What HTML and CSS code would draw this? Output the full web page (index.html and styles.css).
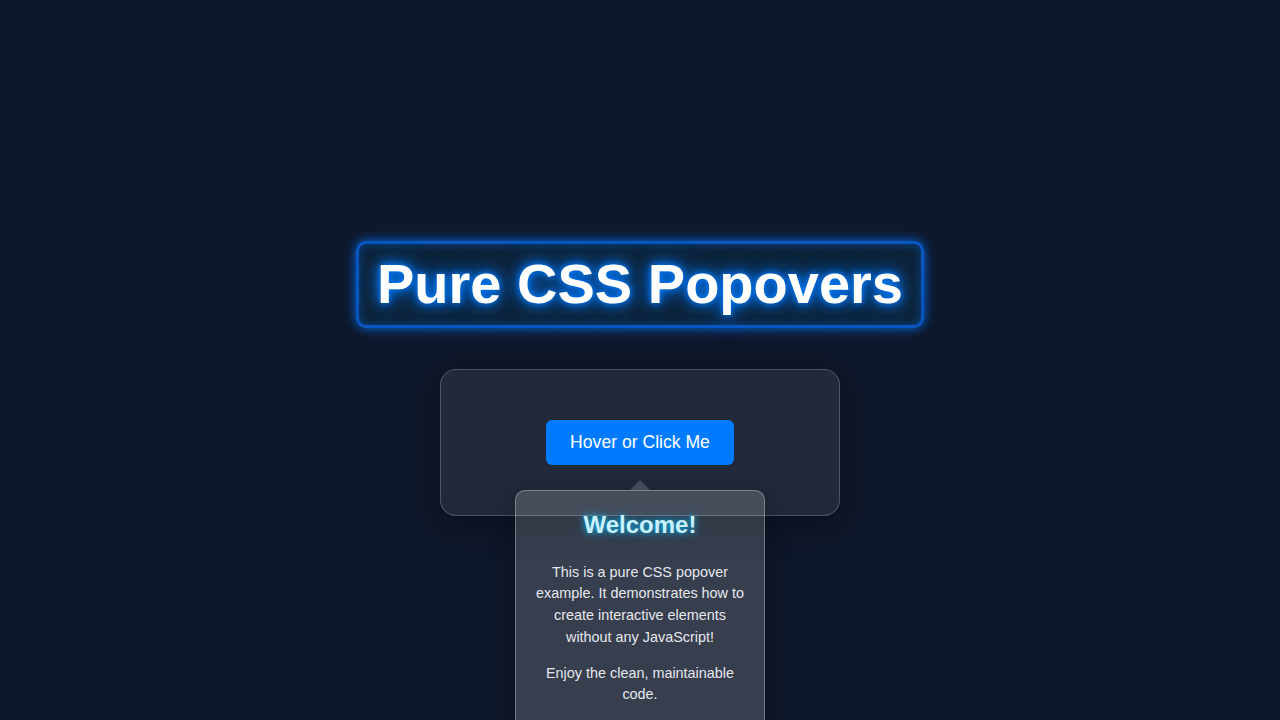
FILE: index.html
```html
<!DOCTYPE html>
<html lang="en">
<head>
<meta charset="utf-8">
<title>Pure CSS Popovers</title>
<link rel="stylesheet" href="styles.css">
</head>
<body>
  <h1 class="title">Pure CSS Popovers</h1>
  <div class="card">
    <div class="popover-wrap">
      <button class="trigger">Hover or Click Me</button>
      <div class="popover">
        <h3 class="popover-title">Welcome!</h3>
        <p class="popover-text">This is a pure CSS popover example. It demonstrates how to create interactive elements without any JavaScript!</p>
        <p class="popover-text">Enjoy the clean, maintainable code.</p>
      </div>
    </div>
  </div>
</body>
</html>
```

FILE: styles.css
```css
html, body {
  margin: 0;
  padding: 0;
}
body {
  min-height: 100vh;
  background: #0f172a;
  font-family: "Liberation Sans", Arial, sans-serif;
  display: flex;
  flex-direction: column;
  align-items: center;
  justify-content: center;
  color: #e5e7eb;
  overflow: hidden;
}
.title {
  margin: 37px 0 41px;
  padding: 8px 18px;
  font-size: 56px;
  font-weight: bold;
  line-height: 1.15;
  color: #ffffff;
  border: 3px solid rgba(10, 100, 230, 0.8);
  border-radius: 10px;
  background: rgba(0, 120, 170, 0.12);
  text-shadow: 0 0 6px #007bff, 0 0 14px #007bff, 0 0 22px rgba(0, 123, 255, 0.7);
  box-shadow: 0 0 10px rgba(0, 123, 255, 0.7), 0 0 18px rgba(0, 123, 255, 0.3), inset 0 0 10px rgba(0, 123, 255, 0.4);
}
.card {
  width: 400px;
  box-sizing: border-box;
  padding: 50px 0;
  display: flex;
  justify-content: center;
  background: rgba(255, 255, 255, 0.08);
  border: 1px solid rgba(255, 255, 255, 0.2);
  border-radius: 16px;
  box-shadow: 0 8px 32px rgba(0, 0, 0, 0.35);
}
.popover-wrap {
  position: relative;
}
.trigger {
  display: block;
  width: 188px;
  height: 45px;
  border: none;
  border-radius: 6px;
  background: #007bff;
  color: #ffffff;
  font-family: "Liberation Sans", Arial, sans-serif;
  font-size: 17.6px;
  cursor: pointer;
}
.popover {
  position: absolute;
  top: calc(100% + 25px);
  left: 50%;
  transform: translateX(-50%);
  width: 250px;
  box-sizing: border-box;
  padding: 20px 20px;
  text-align: center;
  background: rgba(255, 255, 255, 0.17);
  border: 1px solid rgba(255, 255, 255, 0.3);
  border-radius: 10px;
  box-shadow: 0 8px 24px rgba(0, 0, 0, 0.3);
}
.popover::before {
  content: "";
  position: absolute;
  top: -11px;
  left: 50%;
  transform: translateX(-50%);
  border-left: 10px solid transparent;
  border-right: 10px solid transparent;
  border-bottom: 10px solid rgba(255, 255, 255, 0.17);
}
.popover-title {
  margin: 0 0 23px;
  font-size: 24px;
  font-weight: bold;
  color: #c9f1ff;
  text-shadow: 0 0 6px rgba(0, 191, 255, 0.8), 0 0 12px rgba(0, 191, 255, 0.5);
}
.popover-text {
  margin: 0 0 14.4px;
  font-size: 14.4px;
  line-height: 1.5;
  color: #e6e8ee;
}
```
